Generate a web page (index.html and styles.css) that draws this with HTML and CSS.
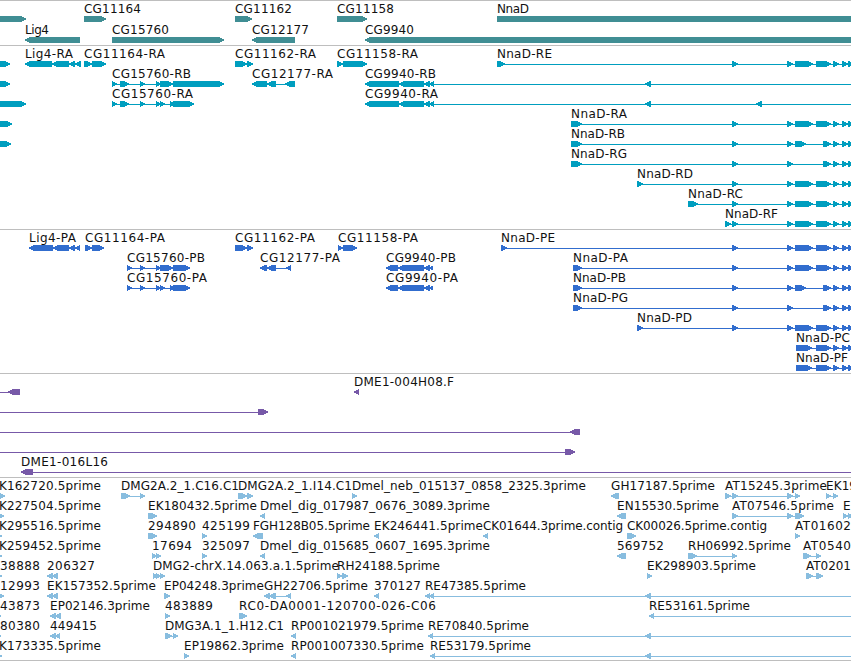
FILE: index.html
```html
<!DOCTYPE html>
<html lang="en">
<head>
  <meta charset="utf-8">
  <title>Genome region</title>
  <link rel="stylesheet" href="styles.css">
</head>
<body>

  <main class="browser">
    <section class="track genes" id="genes"></section>
    <section class="track transcripts" id="transcripts"></section>
    <section class="track cds" id="cds"></section>
    <section class="track bacs" id="bacs"></section>
    <section class="track ests" id="ests"></section>
  </main>

  <script src="tracks.js"></script>
</body>
</html>
```

FILE: styles.css
```css
body {
  margin: 0;
  background: #fff;
  overflow: hidden;
}

.browser {
  display: flex;
  flex-direction: column;
  width: 851px;
  height: 660px;
  border-bottom: 1px solid #bebebe;
}

.track {
  border-top: 1px solid #bebebe;
  padding-bottom: 3px;
}

.row {
  display: block;
  width: 851px;
  height: 20px;
  overflow: visible;
}

.label {
  font-family: "DejaVu Sans", sans-serif;
  font-size: 12px;
  fill: #111;
}

.shape {
  shape-rendering: crispEdges;
}

.genes {
  color: #408e94;
  padding-bottom: 2px;
}

.genes .row {
  height: 21px;
}

.transcripts {
  color: #009ebf;
}

.cds {
  color: #316dce;
}

.bacs {
  color: #7759a8;
}

.ests {
  color: #88bddf;
  padding-bottom: 2px;
}
```

FILE: tracks.js
```js
// feature: [label, label start, label end, strand, exons, line end (optional)]
const R = 1, L = -1;
const tail = [[833, 839], [842, 848], [848, 854]];
const nnad = [[732, 738], [787, 793], [795, 813], [816, 831], ...tail];
const nnadB = [[732, 738], [787, 793], [795, 806], [823, 831], ...tail];
const nnadG = [[732, 738], [787, 793], [823, 831], ...tail];
const EDGE = 860;

const tracks = {
  genes: [
    [
      ['', 0, 0, R, [[-9, 26]]],
      ['CG11164', 84, 141, R, [[84, 106]]],
      ['CG11162', 235, 292, R, [[235, 252]]],
      ['CG11158', 337, 394, R, [[337, 367]]],
      ['NnaD', 497, 529, R, [[497, EDGE]]]
    ],
    [
      ['Lig4', 25, 49, L, [[25, 80]]],
      ['CG15760', 112, 169, R, [[112, 224]]],
      ['CG12177', 252, 309, L, [[252, 295]]],
      ['CG9940', 365, 414, L, [[365, EDGE]]]
    ]
  ],
  transcripts: [
    [
      ['', 0, 0, R, [[-9, 10]]],
      ['Lig4-RA', 25, 73, L, [[25, 52], [52, 69], [69, 75], [75, 81]]],
      ['CG11164-RA', 84, 165, R, [[84, 92], [92, 106]]],
      ['CG11162-RA', 235, 316, R, [[235, 247], [247, 253]]],
      ['CG11158-RA', 337, 418, R, [[337, 343], [343, 367]]],
      ['NnaD-RE', 497, 552, R, [[497, 505], ...nnad]]
    ],
    [
      ['', 0, 0, R, [[-9, 10]]],
      ['CG15760-RB', 112, 191, R, [[112, 117], [120, 129], [140, 145], [156, 161], [160, 173], [173, 224]]],
      ['CG12177-RA', 252, 333, L, [[252, 267], [267, 276], [285, 295]]],
      ['CG9940-RB', 365, 436, L, [[365, 399], [399, 424], [424, 430], [429, 434], [645, 651]], EDGE]
    ],
    [
      ['', 0, 0, R, [[-9, 26]]],
      ['CG15760-RA', 112, 193, R, [[112, 117], [120, 129], [140, 145], [156, 161], [160, 165], [170, 175], [173, 194]]],
      ['CG9940-RA', 365, 438, L, [[365, 399], [399, 424], [424, 430], [429, 434], [645, 651], [756, 762]], EDGE]
    ],
    [
      ['', 0, 0, R, [[-9, 12]]],
      ['NnaD-RA', 571, 627, R, [[571, 582], ...nnad]]
    ],
    [
      ['', 0, 0, R, [[-9, 11]]],
      ['NnaD-RB', 571, 625, R, [[571, 582], ...nnadB]]
    ],
    [['NnaD-RG', 571, 627, R, [[571, 582], ...nnadG]]],
    [['NnaD-RD', 637, 693, R, [[637, 643], ...nnad]]],
    [['NnaD-RC', 688, 743, R, [[688, 698], ...nnad]]],
    [['NnaD-RF', 725, 778, R, [[725, 731], ...nnad]]]
  ],
  cds: [
    [
      ['Lig4-PA', 29, 76, L, [[29, 53], [53, 69], [69, 75], [75, 80]]],
      ['CG11164-PA', 85, 165, R, [[85, 92], [92, 104]]],
      ['CG11162-PA', 235, 315, R, [[235, 247], [247, 253]]],
      ['CG11158-PA', 338, 418, R, [[338, 343], [343, 357]]],
      ['NnaD-PE', 501, 555, R, [[501, 507], ...nnad]]
    ],
    [
      ['CG15760-PB', 127, 205, R, [[127, 132], [140, 145], [156, 161], [160, 173], [173, 190]]],
      ['CG12177-PA', 260, 340, L, [[260, 267], [267, 276], [286, 291]]],
      ['CG9940-PB', 386, 456, L, [[386, 398], [398, 424], [424, 430], [429, 433]]],
      ['NnaD-PA', 573, 628, R, [[573, 582], ...nnad]]
    ],
    [
      ['CG15760-PA', 127, 207, R, [[127, 132], [140, 145], [156, 161], [160, 165], [170, 175], [173, 190]]],
      ['CG9940-PA', 386, 458, L, [[386, 398], [398, 424], [424, 430], [429, 433]]],
      ['NnaD-PB', 573, 626, R, [[573, 582], ...nnadB]]
    ],
    [['NnaD-PG', 573, 628, R, [[573, 582], ...nnadG]]],
    [['NnaD-PD', 637, 692, R, [[637, 643], ...nnad]]],
    [['NnaD-PC', 796, 850, R, [[796, 812], ...nnad.slice(3)]]],
    [['NnaD-PF', 796, 848, R, [[796, 812], ...nnad.slice(3)]]]
  ],
  bacs: [
    [
      ['', 0, 0, L, [[-9, -4], [8, 20]]],
      ['DME1-004H08.F', 354, 454, L, [[354, 359]]]
    ],
    [['', 0, 0, R, [[-9, -4], [258, 268]]]],
    [['', 0, 0, L, [[-9, -4], [570, 580]]]],
    [['', 0, 0, R, [[-9, -4], [565, 575]]]],
    [['DME1-016L16', 21, 108, L, [[21, 33]], EDGE]]
  ],
  ests: [
    [
      ['K162720.5prime', -1, 101, R, [[-9, 5]]],
      ['DMG2A.2_1.C16.C1', 121, 239, R, [[121, 130], [140, 145]]],
      ['DMG2A.2_1.I14.C1', 238, 352, R, [[238, 247], [247, 253]]],
      ['Dmel_neb_015137_0858_2325.3prime', 352, 586, R, [[352, 357]]],
      ['GH17187.5prime', 611, 715, L, [[611, 619]]],
      ['AT15245.3prime', 725, 827, R, [[725, 731], [732, 738], [787, 793], [795, 800]]],
      ['EK19', 826, 857, R, [[826, 831], [833, 838]]]
    ],
    [
      ['K227504.5prime', -1, 101, R, [[-9, 4]]],
      ['EK180432.5prime', 148, 257, R, [[148, 157]]],
      ['Dmel_dig_017987_0676_3089.3prime', 260, 490, L, [[260, 265]]],
      ['EN15530.5prime', 617, 719, L, [[617, 626]]],
      ['AT07546.5prime', 732, 834, R, [[732, 738], [787, 793], [795, 804]]],
      ['E', 843, 851, R, [[843, 848], [848, 853]]]
    ],
    [
      ['K295516.5prime', -1, 101, R, [[-9, 2]]],
      ['294890', 148, 196, R, [[148, 157]]],
      ['425199', 202, 250, R, [[202, 207]]],
      ['FGH128B05.5prime', 253, 370, L, [[253, 263]]],
      ['EK246441.5prime', 374, 483, L, [[374, 379]]],
      ['CK01644.3prime.contig', 483, 623, L, [[483, 488]]],
      ['CK00026.5prime.contig', 627, 767, R, [[627, 636]]],
      ['AT01602', 795, 851, R, [[795, 800]]]
    ],
    [
      ['K259452.5prime', -1, 101, R, [[-9, 2]]],
      ['17694', 152, 192, R, [[152, 157], [156, 161]]],
      ['325097', 202, 250, R, [[202, 207]]],
      ['Dmel_dig_015685_0607_1695.3prime', 260, 490, L, [[260, 265]]],
      ['569752', 617, 664, L, [[617, 626]]],
      ['RH06992.5prime', 688, 791, R, [[688, 697], [732, 737]]],
      ['AT0540', 803, 851, R, [[803, 811], [816, 821]]]
    ],
    [
      ['38888', 0, 40, R, [[-9, 2]]],
      ['206327', 47, 95, L, [[47, 53], [52, 58]]],
      ['DMG2-chrX.14.063.a.1.5prime', 153, 339, R, [[153, 158], [156, 161], [160, 165]]],
      ['RH24188.5prime', 337, 440, R, [[337, 342], [342, 348]]],
      ['EK298903.5prime', 647, 756, R, [[647, 652]]],
      ['AT0201', 806, 851, R, [[806, 813], [816, 823]]]
    ],
    [
      ['12993', 0, 40, R, [[-9, 4]]],
      ['EK157352.5prime', 47, 156, L, [[47, 53], [52, 58]]],
      ['EP04248.3prime', 164, 264, R, [[164, 170]]],
      ['GH22706.5prime', 264, 368, L, [[264, 270], [269, 276], [286, 291]]],
      ['370127', 374, 421, L, [[374, 379]]],
      ['RE47385.5prime', 425, 526, L, [[425, 430], [429, 434], [645, 651]], EDGE]
    ],
    [
      ['43873', 0, 40, R, [[-9, 1]]],
      ['EP02146.3prime', 50, 150, L, [[50, 56], [55, 61]]],
      ['483889', 165, 213, R, [[165, 170]]],
      ['RC0-DA0001-120700-026-C06', 239, 436, R, [[239, 247]]],
      ['RE53161.5prime', 649, 750, L, [[649, 654]], EDGE]
    ],
    [
      ['80380', 0, 40, R, [[-9, 1]]],
      ['449415', 50, 97, L, [[50, 56], [55, 60]]],
      ['DMG3A.1_1.H12.C1', 165, 284, R, [[165, 172], [173, 178]]],
      ['RP001021979.5prime', 291, 424, L, [[291, 296]]],
      ['RE70840.5prime', 428, 529, L, [[428, 433], [645, 651]], EDGE]
    ],
    [
      ['K173335.5prime', -1, 101, R, [[-9, 2]]],
      ['EP19862.3prime', 184, 284, R, [[184, 189]]],
      ['RP001007330.5prime', 291, 424, L, [[291, 296]]],
      ['RE53179.5prime', 430, 531, L, [[430, 435], [645, 651]], EDGE]
    ]
  ]
};

// how far each pixel row of an exon stops short of its tip
const TIP = [4, 2, 0, 0, 2, 4];

function exon([x1, x2], strand) {
  return TIP.map((cut, i) => {
    const from = strand === L ? x1 + cut : x1;
    const to = strand === R ? x2 - cut : x2;
    return `M${from} ${15 + i}H${to}v1H${from}Z`;
  }).join('');
}

function drawFeature([label, x, end, strand, exons, lineEnd]) {
  const from = exons[0][0] + (strand === L ? 2 : 0);
  const to = lineEnd || exons[exons.length - 1][1] - 2;
  let out = `<path class="shape" fill="currentColor" d="M${from} 18H${to}V19H${from}Z"/>`;
  out += exons.map(e => `<path class="shape" fill="currentColor" d="${exon(e, strand)}"/>`).join('');
  if (label) {
    out += `<text class="label" x="${x}" y="12" textLength="${end - x}">${label}</text>`;
  }
  return out;
}

for (const id in tracks) {
  document.getElementById(id).innerHTML = tracks[id]
    .map(row => `<svg class="row">${row.map(drawFeature).join('')}</svg>`)
    .join('');
}
```
